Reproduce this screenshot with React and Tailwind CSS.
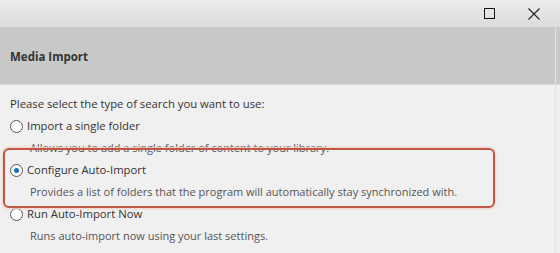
import React from "react";

function Radio({ checked }) {
  return (
    <span className="relative flex h-[13px] w-[13px] shrink-0 items-center justify-center rounded-full border border-[#555] bg-white">
      {checked && <span className="h-[5px] w-[5px] rounded-full bg-[#1e6fb8]" />}
    </span>
  );
}

export default function App() {
  return (
    <div className="relative h-[253px] w-[560px] overflow-hidden bg-[#f0f0f0] text-[11.3px] text-[#333] [font-family:'Open_Sans',sans-serif]">
      <div className="flex h-[27px] items-center justify-end bg-gradient-to-b from-[#ececec] to-[#dcdcdc] pr-[20px]">
        <div className="flex items-center gap-[33px]">
          <span className="h-[11px] w-[11px] border border-[#111]" />
          <svg width="12" height="12" viewBox="0 0 12 12">
            <path d="M0.5 0.5 L11.5 11.5 M11.5 0.5 L0.5 11.5" stroke="#222" strokeWidth="1.1" />
          </svg>
        </div>
      </div>
      <div className="flex h-[58px] items-center border-b border-[#d8d8d8] bg-[#c8c8c8] pl-[10px] pt-[2px]">
        <span className="text-[11.5px] font-bold text-[#333]">Media Import</span>
      </div>
      <div className="flex flex-col pl-[10px] pt-[8px]">
        <div className="h-[22px] leading-[22px]">Please select the type of search you want to use:</div>
        <div className="flex h-[22px] items-center gap-[4px]">
          <Radio />
          <span>Import a single folder</span>
        </div>
        <div className="h-[22px] pl-[20px] text-[11px] leading-[22px] text-[#555]">
          Allows you to add a single folder of content to your library.
        </div>
        <div className="flex h-[22px] items-center gap-[4px]">
          <Radio checked />
          <span>Configure Auto-Import</span>
        </div>
        <div className="h-[22px] pl-[20px] text-[11px] leading-[22px] text-[#555]">
          Provides a list of folders that the program will automatically stay synchronized with.
        </div>
        <div className="flex h-[22px] items-center gap-[4px]">
          <Radio />
          <span>Run Auto-Import Now</span>
        </div>
        <div className="h-[22px] pl-[20px] text-[11px] leading-[22px] text-[#555]">
          Runs auto-import now using your last settings.
        </div>
      </div>
      <div className="pointer-events-none absolute left-[3px] top-[148px] h-[60px] w-[492px] rounded-[6px] border-2 border-[#bf5646] shadow-[0_0_2px_1px_#f6cfc4]" />
      <div className="absolute right-[4px] top-[27px] h-[226px] w-px bg-[#e4e4e4]" />
    </div>
  );
}
